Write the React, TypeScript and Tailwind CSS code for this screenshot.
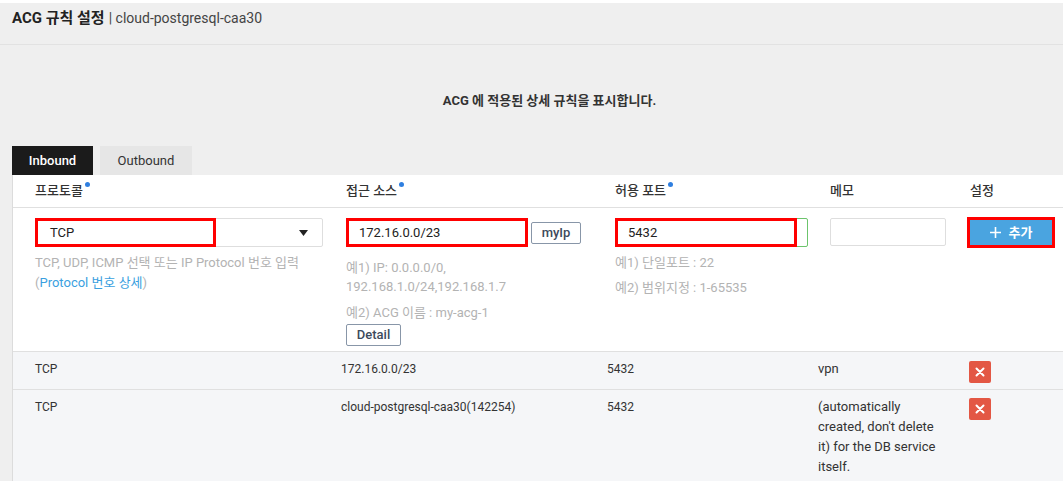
import React from "react";

const font = { fontFamily: "Roboto, 'Noto Sans CJK KR', 'Noto Sans', sans-serif" };

function Dot() {
  return <span className="inline-block w-[5px] h-[5px] rounded-full bg-[#2f7fe0] align-top ml-[2px] mt-[1px]" />;
}

function DelBtn() {
  return (
    <div className="w-[22px] h-[22px] rounded-[2px] bg-[#e35744] flex items-center justify-center">
      <svg width="10" height="10" viewBox="0 0 10 10">
        <path d="M1.5 1.5L8.5 8.5M8.5 1.5L1.5 8.5" stroke="white" strokeWidth="2" strokeLinecap="round" />
      </svg>
    </div>
  );
}

export default function App() {
  return (
    <div className="w-[1063px] h-[481px] overflow-hidden bg-[#efefef] text-[12px] text-[#333]" style={font}>
      <div className="h-[3px] bg-white" />
      <div className="h-[42px] border-b border-[#e2e2e2] px-[12px] pt-[4px] flex items-baseline">
        <span className="text-[15px] font-bold text-[#222]">ACG 규칙 설정</span>
        <span className="text-[14px] text-[#444] ml-[4px]">| cloud-postgresql-caa30</span>
      </div>
      <div className="h-[101px] flex items-start justify-center pt-[46px]">
        <span className="text-[13px] font-bold text-[#333] ml-[36px]">ACG 에 적용된 상세 규칙을 표시합니다.</span>
      </div>
      <div className="flex pl-[12px] gap-[7px] h-[29px]">
        <div className="w-[81px] bg-[#1b1b1b] text-white flex items-center justify-center text-[13px] font-medium">Inbound</div>
        <div className="w-[92px] bg-[#e6e6e6] text-[#333] flex items-center justify-center text-[13px]">Outbound</div>
      </div>
      <div className="ml-[12px] bg-white border-l border-[#dcdcdc]">
        <div className="grid grid-cols-[311px_269px_215px_140px_1fr] h-[33px] items-center pl-[22px] border-b border-[#e0e0e0] text-[13px] font-medium text-[#333]">
          <div>프로토콜<Dot /></div>
          <div>접근 소스<Dot /></div>
          <div>허용 포트<Dot /></div>
          <div>메모</div>
          <div>설정</div>
        </div>
        <div className="grid grid-cols-[311px_269px_215px_137px_1fr] h-[144px] pl-[22px] pt-[10px] border-b border-[#e0e0e0] text-[13px]">
          <div>
            <div className="relative w-[288px] h-[29px] border border-[#dedede] rounded-[2px] flex items-center pl-[14px] text-[#222]">
              TCP
              <svg className="absolute right-[14px] top-[11px]" width="9" height="6" viewBox="0 0 9 6"><path d="M0 0H9L4.5 6Z" fill="#222" /></svg>
              <div className="absolute left-[-1px] top-[-1px] w-[181px] h-[29px] border-[3px] border-[#ff0000]" />
            </div>
            <div className="mt-[6px] leading-[20px] text-[#b3b3b3]">
              TCP, UDP, ICMP 선택 또는 IP Protocol 번호 입력
              <br />(<span className="text-[#3b9fe0]">Protocol 번호 상세</span>)
            </div>
          </div>
          <div>
            <div className="flex items-center gap-[3px]">
              <div className="w-[182px] h-[29px] border-[3px] border-[#ff0000] flex items-center pl-[10px] text-[#222]">172.16.0.0/23</div>
              <div className="w-[50px] h-[22px] border border-[#8896a8] rounded-[2px] flex items-center justify-center text-[13px] font-medium text-[#3c4a5c]">myIp</div>
            </div>
            <div className="mt-[11px] leading-[19px] text-[#b3b3b3]">
              예1) IP: 0.0.0.0/0,
              <br />192.168.1.0/24,192.168.1.7
            </div>
            <div className="mt-[7px] leading-[19px] text-[#b3b3b3]">예2) ACG 이름 : my-acg-1</div>
            <div className="mt-[2px] w-[55px] h-[22px] border border-[#8896a8] rounded-[2px] flex items-center justify-center text-[13px] font-medium text-[#3c4a5c]">Detail</div>
          </div>
          <div>
            <div className="relative w-[193px] h-[29px] border border-[#6cc46c] rounded-[2px]">
              <div className="absolute left-[-1px] top-[-1px] w-[182px] h-[29px] border-[3px] border-[#ff0000] flex items-center pl-[10px] text-[#222]">5432</div>
            </div>
            <div className="mt-[6px] leading-[20px] text-[#b3b3b3]">예1) 단일포트 : 22</div>
            <div className="mt-[5px] leading-[20px] text-[#b3b3b3]">예2) 범위지정 : 1-65535</div>
          </div>
          <div>
            <div className="w-[116px] h-[28px] border border-[#dedede] rounded-[2px]" />
          </div>
          <div>
            <div className="w-[88px] h-[31px] mt-[-1px] border-[3px] border-[#ff0000] bg-[#4aa4e0] flex items-center justify-center text-white font-bold text-[13px] gap-[8px]">
              <svg width="11" height="11" viewBox="0 0 11 11"><path d="M5.5 0V11M0 5.5H11" stroke="white" strokeWidth="1.6" /></svg>
              <span>추가</span>
            </div>
          </div>
        </div>
        <div className="grid grid-cols-[306px_266px_211px_151px_1fr] h-[38px] pl-[22px] pt-[8px] bg-[#f5f6f8] border-b border-[#e0e0e0] text-[#333]">
          <div className="leading-[18px]">TCP</div>
          <div className="leading-[18px]">172.16.0.0/23</div>
          <div className="leading-[18px]">5432</div>
          <div className="leading-[18px] text-[13px]">vpn</div>
          <div className="mt-[1px]"><DelBtn /></div>
        </div>
        <div className="grid grid-cols-[306px_266px_211px_151px_1fr] h-[100px] pl-[22px] pt-[7px] bg-[#f5f6f8] text-[#333]">
          <div className="leading-[20px]">TCP</div>
          <div className="leading-[20px]">cloud-postgresql-caa30(142254)</div>
          <div className="leading-[20px]">5432</div>
          <div className="leading-[20px] text-[13px]">
            (automatically
            <br />created, don't delete
            <br />it) for the DB service
            <br />itself.
          </div>
          <div className="mt-[1px]"><DelBtn /></div>
        </div>
      </div>
    </div>
  );
}
